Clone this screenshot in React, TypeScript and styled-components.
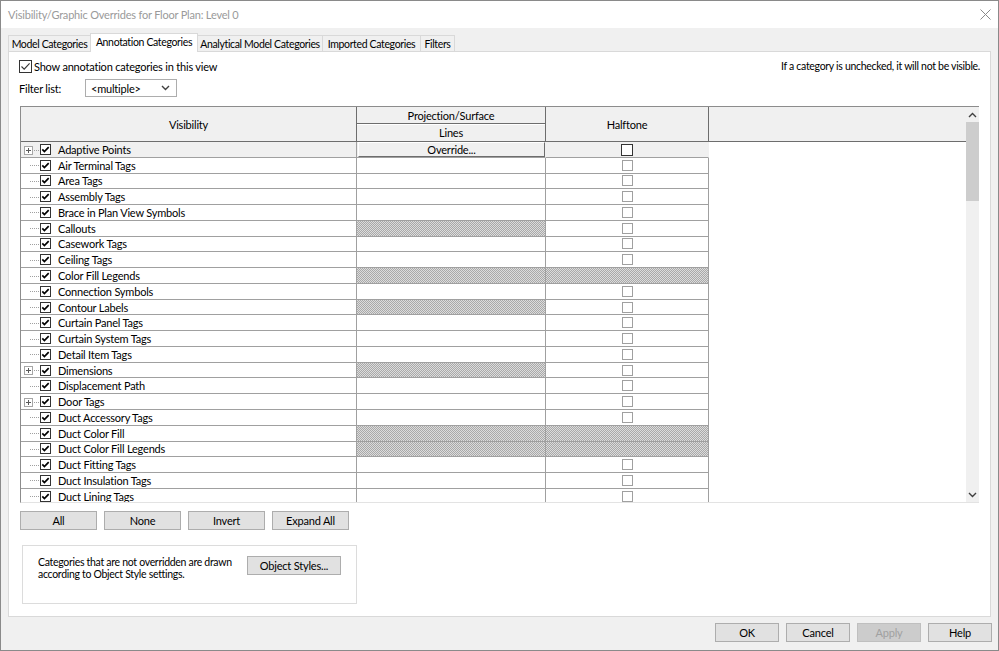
import React from 'react';
import styled, { createGlobalStyle, css } from 'styled-components';

const Global = createGlobalStyle`
  html, body { margin: 0; padding: 0; background: #fff; }
  body { font-family: "Segoe UI", Lato, "Noto Sans", sans-serif; font-size: 11px; letter-spacing: -0.2px; color: #000; }
  * { box-sizing: border-box; }
`;

const Window = styled.div`
  width: 999px;
  height: 651px;
  border: 1px solid #8a8a8a;
  display: flex;
  flex-direction: column;
  background: #f0f0f0;
  overflow: hidden;
`;

const TitleBar = styled.div`
  height: 27px;
  flex: 0 0 27px;
  background: #fff;
  display: flex;
  align-items: center;
  justify-content: space-between;
  padding: 0 7px 0 7px;
  color: #9a9a9a;
  font-size: 11px;
`;

const Main = styled.div`
  flex: 1;
  display: flex;
  flex-direction: column;
  padding: 5px 7px 0 7px;
`;

const TabStrip = styled.div`
  height: 18px;
  display: flex;
  align-items: flex-end;
  position: relative;
  z-index: 1;
`;

const Tab = styled.div<{ $w: number; $active?: boolean }>`
  width: ${p => p.$w}px;
  height: 16px;
  display: flex;
  align-items: center;
  justify-content: center;
  border: 1px solid #d9d9d9;
  border-bottom: none;
  margin-left: -1px;
  background: #f0f0f0;
  white-space: nowrap;
  font-size: 10.5px;
  letter-spacing: -0.35px;
  &:first-child { margin-left: 0; }
  ${p => p.$active && css`
    height: 19px;
    margin-bottom: -1px;
    background: #fff;
    padding-bottom: 3px;
  `}
`;

const Panel = styled.div`
  flex: 0 0 566px;
  background: #fff;
  border: 1px solid #d9d9d9;
  padding: 7px 11px 0 10px;
  display: flex;
  flex-direction: column;
`;

const TopRow = styled.div`
  height: 14px;
  display: flex;
  align-items: center;
  justify-content: space-between;
`;

const CheckLabel = styled.label`
  display: flex;
  align-items: center;
  gap: 2px;
`;

const Note = styled.span`
  margin-right: -1px;
  font-size: 10.5px;
  letter-spacing: -0.3px;
`;

const FilterRow = styled.div`
  margin-top: 6px;
  height: 18px;
  display: flex;
  align-items: center;
`;

const FilterLabel = styled.span`
  width: 66px;
`;

const Dropdown = styled.div`
  width: 92px;
  height: 18px;
  border: 1px solid #adadad;
  background: #fff;
  display: flex;
  align-items: center;
  justify-content: space-between;
  padding: 0 6px 0 5px;
`;

const Table = styled.div`
  margin-top: 9px;
  margin-left: 1px;
  height: 397px;
  border-top: 1px solid #8c8c8c;
  border-left: 1px solid #8c8c8c;
  border-bottom: 1px solid #e3e3e3;
  display: flex;
`;

const TableContent = styled.div`
  flex: 1;
  display: flex;
  flex-direction: column;
  overflow: hidden;
`;

const Header = styled.div`
  height: 35px;
  flex: 0 0 35px;
  display: grid;
  grid-template-columns: 336px 189px 163px 1fr;
  background: #f0f0f0;
  border-bottom: 1px solid #6d6d6d;
`;

const HeadCell = styled.div`
  border-right: 1px solid #6d6d6d;
  display: flex;
  align-items: center;
  justify-content: center;
  &:last-child { border-right: none; }
`;

const HeadStack = styled.div`
  border-right: 1px solid #6d6d6d;
  display: grid;
  grid-template-rows: 17px 1fr;
`;

const HeadSub = styled.div<{ $top?: boolean }>`
  display: flex;
  align-items: center;
  justify-content: center;
  ${p => p.$top && css`
    border-bottom: 1px solid #6d6d6d;
    box-shadow: 0 1px 0 #fff;
  `}
`;

const Body = styled.div`
  flex: 1;
  overflow: hidden;
  background: #fff;
`;

const Row = styled.div`
  height: 15.77px;
  display: grid;
  grid-template-columns: 336px 189px 163px 1fr;
`;

const hatch = css`
  background-color: #c4c4c4;
  background-image: repeating-conic-gradient(#a9a9a9 0 25%, #dcdcdc 0 50%);
  background-size: 2px 2px;
`;

const VisCell = styled.div<{ $sel?: boolean }>`
  border-right: 1px solid #a0a0a0;
  border-bottom: 1px solid #a0a0a0;
  background: ${p => (p.$sel ? '#f0f0f0' : '#fff')};
  display: flex;
  align-items: center;
  overflow: hidden;
  white-space: nowrap;
`;

const DataCell = styled.div<{ $sel?: boolean; $hatch?: boolean }>`
  border-right: 1px solid ${p => (p.$sel ? 'transparent' : '#a0a0a0')};
  border-bottom: 1px solid #a0a0a0;
  background: ${p => (p.$sel ? '#f0f0f0' : '#fff')};
  display: flex;
  align-items: center;
  justify-content: center;
  ${p => p.$hatch && hatch}
`;

const Gutter = styled.div`
  width: 19px;
  height: 100%;
  display: flex;
  align-items: center;
  position: relative;
`;

const Plus = styled.div`
  position: absolute;
  left: 3px;
  top: 50%;
  margin-top: -4px;
  width: 9px;
  height: 9px;
  border: 1px solid #a6a6a6;
  background: #fff;
  &::before, &::after {
    content: '';
    position: absolute;
    background: #5a5a5a;
  }
  &::before { left: 1px; right: 1px; top: 3px; height: 1px; }
  &::after { top: 1px; bottom: 1px; left: 3px; width: 1px; }
`;

const Dots = styled.div`
  position: absolute;
  left: 9px;
  right: 1px;
  top: 50%;
  border-top: 1px dotted #a0a0a0;
`;

const RowLabel = styled.span`
  margin-left: 7px;
`;

const OverrideButton = styled.div`
  width: 187px;
  height: 15px;
  align-self: flex-start;
  margin-left: 1px;
  background: #f0f0f0;
  border-top: 1px solid #fff;
  border-left: 1px solid #fff;
  border-right: 1px solid #6d6d6d;
  border-bottom: 1px solid #6d6d6d;
  display: flex;
  align-items: center;
  justify-content: center;
  line-height: 1;
`;

const HalfBox = styled.div<{ $big?: boolean }>`
  width: ${p => (p.$big ? 12 : 11)}px;
  height: ${p => (p.$big ? 12 : 11)}px;
  border: 1px solid ${p => (p.$big ? '#333' : '#a0a0a0')};
  background: #fff;
`;

const Spacer = styled.div`
  background: #fff;
`;

const Scrollbar = styled.div`
  width: 13px;
  flex: 0 0 13px;
  background: #f0f0f0;
  display: flex;
  flex-direction: column;
  align-items: stretch;
`;

const ScrollArrow = styled.div`
  height: 15px;
  display: flex;
  align-items: center;
  justify-content: center;
`;

const Thumb = styled.div`
  height: 79px;
  background: #cdcdcd;
`;

const Track = styled.div`
  flex: 1;
`;

const ButtonRow = styled.div`
  margin-top: 8px;
  margin-left: 1px;
  display: flex;
  gap: 7px;
`;

const Btn = styled.div<{ $w: number; $disabled?: boolean }>`
  width: ${p => p.$w}px;
  flex: 0 0 ${p => p.$w}px;
  height: 19px;
  background: #e1e1e1;
  border: 1px solid #adadad;
  display: flex;
  align-items: center;
  justify-content: center;
  color: ${p => (p.$disabled ? '#a0a0a0' : '#000')};
  ${p => p.$disabled && css`
    background: #cccccc;
    border-color: #bfbfbf;
  `}
`;

const Group = styled.div`
  margin-top: 15px;
  margin-left: 3px;
  width: 335px;
  height: 59px;
  border: 1px solid #dcdcdc;
  display: flex;
  align-items: flex-start;
  padding: 10px 0 0 15px;
`;

const GroupText = styled.div`
  width: 209px;
  flex: 0 0 209px;
  line-height: 12px;
  font-size: 10.5px;
  letter-spacing: -0.3px;
`;

const TextLine = styled.div`
  white-space: nowrap;
`;

const Footer = styled.div`
  flex: 1;
  display: flex;
  justify-content: flex-end;
  align-items: flex-start;
  padding-top: 6px;
  margin-right: -1px;
  gap: 7px;
`;

const CheckIcon = () => (
  <svg width="11" height="11" viewBox="0 0 11 11">
    <rect x="0.5" y="0.5" width="10" height="10" fill="#fff" stroke="#333" />
    <path d="M2.3 5.4 L4.4 7.6 L8.7 3.1" fill="none" stroke="#000" strokeWidth="1.7" />
  </svg>
);

const BigCheck = () => (
  <svg width="13" height="13" viewBox="0 0 13 13">
    <rect x="0.5" y="0.5" width="12" height="12" fill="#fff" stroke="#333" />
    <path d="M2.5 6.5 L5.2 9.2 L10.6 3.4" fill="none" stroke="#333" strokeWidth="1.1" />
  </svg>
);

const Chevron = ({ up }: { up?: boolean }) => (
  <svg width="9" height="6" viewBox="0 0 9 6">
    <path d={up ? 'M1 5 L4.5 1.5 L8 5' : 'M1 1 L4.5 4.5 L8 1'} fill="none" stroke="#404040" strokeWidth="1.4" />
  </svg>
);

const CloseIcon = () => (
  <svg width="11" height="11" viewBox="0 0 11 11">
    <path d="M0.5 0.5 L10.5 10.5 M10.5 0.5 L0.5 10.5" stroke="#8a8a8a" strokeWidth="1" />
  </svg>
);

type Item = { name: string; plus?: boolean; ph?: boolean; hh?: boolean };

const items: Item[] = [
  { name: 'Adaptive Points', plus: true },
  { name: 'Air Terminal Tags' },
  { name: 'Area Tags' },
  { name: 'Assembly Tags' },
  { name: 'Brace in Plan View Symbols' },
  { name: 'Callouts', ph: true },
  { name: 'Casework Tags' },
  { name: 'Ceiling Tags' },
  { name: 'Color Fill Legends', ph: true, hh: true },
  { name: 'Connection Symbols' },
  { name: 'Contour Labels', ph: true },
  { name: 'Curtain Panel Tags' },
  { name: 'Curtain System Tags' },
  { name: 'Detail Item Tags' },
  { name: 'Dimensions', plus: true, ph: true },
  { name: 'Displacement Path' },
  { name: 'Door Tags', plus: true },
  { name: 'Duct Accessory Tags' },
  { name: 'Duct Color Fill', ph: true, hh: true },
  { name: 'Duct Color Fill Legends', ph: true, hh: true },
  { name: 'Duct Fitting Tags' },
  { name: 'Duct Insulation Tags' },
  { name: 'Duct Lining Tags' },
];

export default function App() {
  return (
    <>
      <Global />
      <Window>
        <TitleBar>
          <span>Visibility/Graphic Overrides for Floor Plan: Level 0</span>
          <CloseIcon />
        </TitleBar>
        <Main>
          <TabStrip>
            <Tab $w={83}>Model Categories</Tab>
            <Tab $w={108} $active>Annotation Categories</Tab>
            <Tab $w={126}>Analytical Model Categories</Tab>
            <Tab $w={99}>Imported Categories</Tab>
            <Tab $w={35}>Filters</Tab>
          </TabStrip>
          <Panel>
            <TopRow>
              <CheckLabel>
                <BigCheck />
                <span>Show annotation categories in this view</span>
              </CheckLabel>
              <Note>If a category is unchecked, it will not be visible.</Note>
            </TopRow>
            <FilterRow>
              <FilterLabel>Filter list:</FilterLabel>
              <Dropdown>
                <span>&lt;multiple&gt;</span>
                <Chevron />
              </Dropdown>
            </FilterRow>
            <Table>
              <TableContent>
                <Header>
                  <HeadCell>Visibility</HeadCell>
                  <HeadStack>
                    <HeadSub $top>Projection/Surface</HeadSub>
                    <HeadSub>Lines</HeadSub>
                  </HeadStack>
                  <HeadCell>Halftone</HeadCell>
                  <HeadCell />
                </Header>
                <Body>
                  {items.map((it, i) => {
                    const sel = i === 0;
                    return (
                      <Row key={it.name}>
                        <VisCell $sel={sel}>
                          <Gutter>
                            <Dots />
                            {it.plus && <Plus />}
                          </Gutter>
                          <CheckIcon />
                          <RowLabel>{it.name}</RowLabel>
                        </VisCell>
                        <DataCell $sel={sel} $hatch={it.ph}>
                          {sel && <OverrideButton>Override...</OverrideButton>}
                        </DataCell>
                        <DataCell $sel={sel} $hatch={it.hh}>
                          {!it.hh && <HalfBox $big={sel} />}
                        </DataCell>
                        <Spacer />
                      </Row>
                    );
                  })}
                </Body>
              </TableContent>
              <Scrollbar>
                <ScrollArrow><Chevron up /></ScrollArrow>
                <Thumb />
                <Track />
                <ScrollArrow><Chevron /></ScrollArrow>
              </Scrollbar>
            </Table>
            <ButtonRow>
              <Btn $w={77}>All</Btn>
              <Btn $w={77}>None</Btn>
              <Btn $w={77}>Invert</Btn>
              <Btn $w={77}>Expand All</Btn>
            </ButtonRow>
            <Group>
              <GroupText>
                <TextLine>Categories that are not overridden are drawn</TextLine>
                <TextLine>according to Object Style settings.</TextLine>
              </GroupText>
              <Btn $w={94}>Object Styles...</Btn>
            </Group>
          </Panel>
          <Footer>
            <Btn $w={64}>OK</Btn>
            <Btn $w={64}>Cancel</Btn>
            <Btn $w={64} $disabled>Apply</Btn>
            <Btn $w={64}>Help</Btn>
          </Footer>
        </Main>
      </Window>
    </>
  );
}
